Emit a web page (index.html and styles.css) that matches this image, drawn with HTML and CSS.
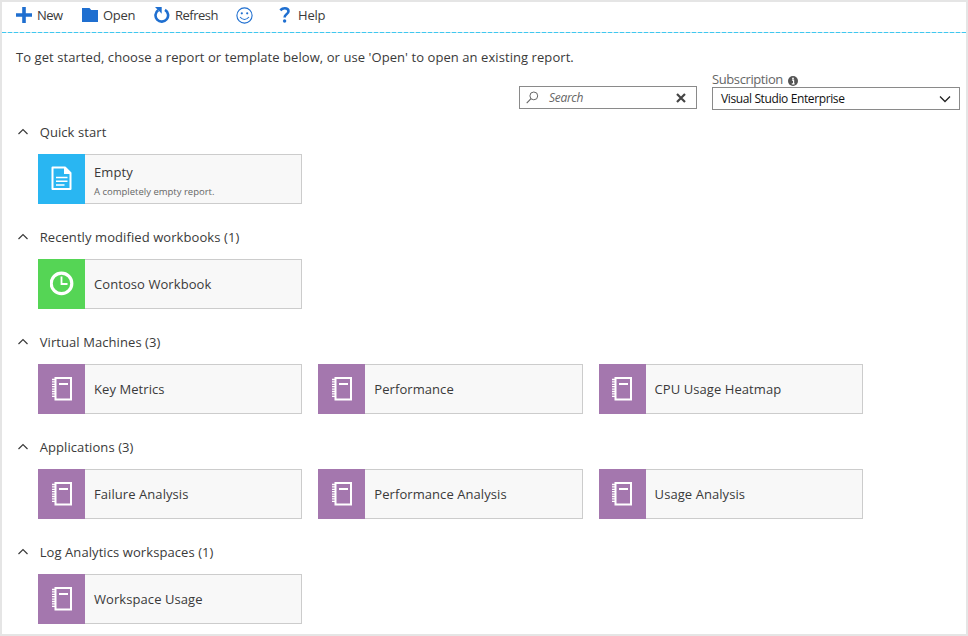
FILE: index.html
```html
<!DOCTYPE html>
<html lang="en">
<head>
<meta charset="utf-8">
<title>Workbooks</title>
<link rel="stylesheet" href="styles.css">
</head>
<body>
<svg class="defs" width="0" height="0">
  <symbol id="chevron" viewBox="0 0 12 8"><path d="M1.500 6 6 1.600l4.500 4.400" fill="none" stroke="currentColor" stroke-width="1.200"/></symbol>
  <symbol id="notebook" viewBox="0 0 22 26">
    <path d="M4.500 3h15.500v21.500H4.500z" fill="none" stroke="#fff" stroke-width="2"/>
    <path d="M1 4.500h4M1 6.900h4M1 9.300h4M1 11.700h4M1 14.100h4M1 16.500h4M1 18.900h4M1 21.300h4" stroke="#fff" stroke-width="1.300"/>
    <path d="M8 9h9" stroke="#fff" stroke-width="2"/>
  </symbol>
</svg>
<main class="page">
  <nav class="toolbar">
    <a class="tool new"><svg width="16" height="16" viewBox="0 0 16 16"><path d="M6.200 0h3.600v6.200H16v3.600H9.800V16H6.200V9.800H0V6.200h6.200z" fill="currentColor"/></svg><span>New</span></a>
    <a class="tool open"><svg width="16" height="16" viewBox="0 0 16 16"><path d="M0 1h7.500L9.200 3H16v12H0z" fill="currentColor"/></svg><span>Open</span></a>
    <a class="tool refresh"><svg width="16" height="18" viewBox="0 0 16 18"><path d="M11 3.900A6.300 6.300 0 1 1 4.300 4.100" fill="none" stroke="currentColor" stroke-width="2.600"/><path d="M1 1h6.700v6.700L5.600 5.600 4 4z" fill="currentColor"/></svg><span>Refresh</span></a>
    <a class="tool smile"><svg width="17" height="17" viewBox="0 0 17 17"><circle cx="8.500" cy="8.500" r="7.600" fill="none" stroke="currentColor" stroke-width="1.100"/><circle cx="5.800" cy="6.300" r="1.100" fill="currentColor"/><circle cx="11.200" cy="6.300" r="1.100" fill="currentColor"/><path d="M4 10q4.500 5 9 0" fill="none" stroke="currentColor" stroke-width="1.100"/></svg></a>
    <a class="tool help"><svg width="12" height="16" viewBox="0 0 12 16"><path d="M1.300 3.200Q3.300 1.300 5.800 1.300q3.700 0 3.700 2.900 0 1.700-2 3.100-1.900 1.300-1.900 3.200" fill="none" stroke="currentColor" stroke-width="2.600"/><circle cx="5.600" cy="14" r="1.700" fill="currentColor"/></svg><span>Help</span></a>
  </nav>
  <p class="intro">To get started, choose a report or template below, or use 'Open' to open an existing report.</p>
  <div class="filters">
    <div class="search">
      <svg width="13" height="13" viewBox="0 0 13 13"><circle cx="7.800" cy="4.900" r="3.900" fill="none" stroke="#666"/><path d="M5 7.700.7 12.200" stroke="#666" stroke-width="1.100"/></svg>
      <span class="placeholder">Search</span>
      <svg width="10" height="10" viewBox="0 0 10 10"><path d="m1 1 8 8M9 1 1 9" stroke="#444" stroke-width="2.200"/></svg>
    </div>
    <div class="subscription">
      <div class="label"><span>Subscription</span><svg width="10" height="10" viewBox="0 0 10 10"><circle cx="5" cy="5" r="5" fill="#555"/><path d="M4 4.200h1.600v3.600M3.800 7.800h2.800" fill="none" stroke="#fff" stroke-width="1.200"/><circle cx="5" cy="2.400" r=".9" fill="#fff"/></svg></div>
      <div class="select"><span>Visual Studio Enterprise</span><svg width="12" height="8" viewBox="0 0 12 8"><path d="m1 1.500 5 5 5-5" fill="none" stroke="#222" stroke-width="1.300"/></svg></div>
    </div>
  </div>
  <section>
    <h2><svg width="12" height="8"><use href="#chevron"/></svg><span>Quick start</span></h2>
    <div class="cards">
      <article class="card"><div class="tile blue"><svg width="22" height="26" viewBox="0 0 22 26"><path d="M1.500 2.500h12.500L19.500 8v16H1.500z" fill="none" stroke="#fff" stroke-width="2" stroke-linejoin="round"/><path d="M13 2V9H20z" fill="#fff"/><path d="M5 12.500h11.500M5 16.200h11.500M5 19.900h8.500" stroke="#fff" stroke-width="1.500"/></svg></div><div class="text described"><b>Empty</b><small>A completely empty report.</small></div></article>
    </div>
  </section>
  <section>
    <h2><svg width="12" height="8"><use href="#chevron"/></svg><span>Recently modified workbooks (1)</span></h2>
    <div class="cards">
      <article class="card"><div class="tile green"><svg width="24" height="26" viewBox="0 0 24 26"><circle cx="11.500" cy="13.400" r="10.300" fill="none" stroke="#fff" stroke-width="3.200"/><path d="M11.500 6.500v7.500h6" fill="none" stroke="#fff" stroke-width="1.800"/></svg></div><div class="text"><b>Contoso Workbook</b></div></article>
    </div>
  </section>
  <section>
    <h2><svg width="12" height="8"><use href="#chevron"/></svg><span>Virtual Machines (3)</span></h2>
    <div class="cards">
      <article class="card"><div class="tile"><svg width="22" height="26"><use href="#notebook"/></svg></div><div class="text"><b>Key Metrics</b></div></article>
      <article class="card"><div class="tile"><svg width="22" height="26"><use href="#notebook"/></svg></div><div class="text"><b>Performance</b></div></article>
      <article class="card"><div class="tile"><svg width="22" height="26"><use href="#notebook"/></svg></div><div class="text"><b>CPU Usage Heatmap</b></div></article>
    </div>
  </section>
  <section>
    <h2><svg width="12" height="8"><use href="#chevron"/></svg><span>Applications (3)</span></h2>
    <div class="cards">
      <article class="card"><div class="tile"><svg width="22" height="26"><use href="#notebook"/></svg></div><div class="text"><b>Failure Analysis</b></div></article>
      <article class="card"><div class="tile"><svg width="22" height="26"><use href="#notebook"/></svg></div><div class="text"><b>Performance Analysis</b></div></article>
      <article class="card"><div class="tile"><svg width="22" height="26"><use href="#notebook"/></svg></div><div class="text"><b>Usage Analysis</b></div></article>
    </div>
  </section>
  <section>
    <h2><svg width="12" height="8"><use href="#chevron"/></svg><span>Log Analytics workspaces (1)</span></h2>
    <div class="cards">
      <article class="card"><div class="tile"><svg width="22" height="26"><use href="#notebook"/></svg></div><div class="text"><b>Workspace Usage</b></div></article>
    </div>
  </section>
</main>
</body>
</html>
```
FILE: styles.css
```css
* { box-sizing: border-box; }
body { margin: 0; font: 13px/18px "Open Sans", "Noto Sans", sans-serif; color: #3a3a3a; background: #fff; }
.defs { display: block; }
.page { width: 968px; height: 636px; border: 2px solid #e5e5e5; overflow: hidden; }
svg { display: block; flex: none; }
.toolbar { height: 31px; display: flex; align-items: center; padding: 0 0 5px 14px; background: repeating-linear-gradient(90deg, #3fc8f0 0 4px, #c5e6f0 4px 6px) bottom / 100% 1px no-repeat; }
.tool { display: flex; align-items: center; gap: 5px; white-space: nowrap; letter-spacing: -.5px; }
.tool svg { color: #1f6fd0; }
.new { width: 66px; }
.open { width: 72px; letter-spacing: -.3px; }
.refresh { width: 82px; }
.smile { width: 43px; }
.help { gap: 7px; letter-spacing: -.2px; }
.intro { margin: 15px 0 0 14px; white-space: nowrap; letter-spacing: .07px; }
.filters { display: flex; justify-content: flex-end; align-items: flex-end; gap: 15px; height: 42px; margin-top: 2px; padding-right: 6px; }
.search { width: 178px; height: 23px; margin-bottom: 1px; border: 1px solid #8a8a8a; display: flex; align-items: center; padding: 0 10px 0 6px; font-size: 12px; }
.placeholder { flex: 1; margin-left: 10px; font-style: italic; color: #666; letter-spacing: -.3px; }
.subscription { width: 248px; }
.label { display: flex; align-items: center; gap: 5px; height: 16px; color: #666; letter-spacing: -.4px; }
.label svg { margin-top: 3px; }
.select { height: 23px; border: 1px solid #8a8a8a; display: flex; align-items: center; justify-content: space-between; padding: 0 8px; font-size: 12px; color: #111; letter-spacing: -.38px; }
section { height: 105px; padding: 13px 0 0 15px; }
h2 { margin: 0; display: flex; align-items: center; gap: 10.700px; height: 18px; font-size: 13px; font-weight: 400; white-space: nowrap; letter-spacing: .08px; }
.cards { display: flex; gap: 16px; margin: 13px 0 0 21px; }
.card { width: 264.300px; height: 50px; border: 1px solid #ccc; border-left: 0; background: #f8f8f8; display: flex; }
.tile { width: 47px; margin: -1px 0; background: #a477ae; display: flex; align-items: center; justify-content: center; }
.tile svg { margin-top: -2px; }
.blue { background: #29b6f2; }
.green { background: #55d555; }
.text { padding-left: 9px; display: flex; flex-direction: column; justify-content: center; white-space: nowrap; letter-spacing: .07px; }
.described { padding-top: 5px; }
b { font-weight: 400; }
small { font-size: 9.500px; line-height: 16px; color: #666; margin-top: 3px; letter-spacing: 0; }
```
